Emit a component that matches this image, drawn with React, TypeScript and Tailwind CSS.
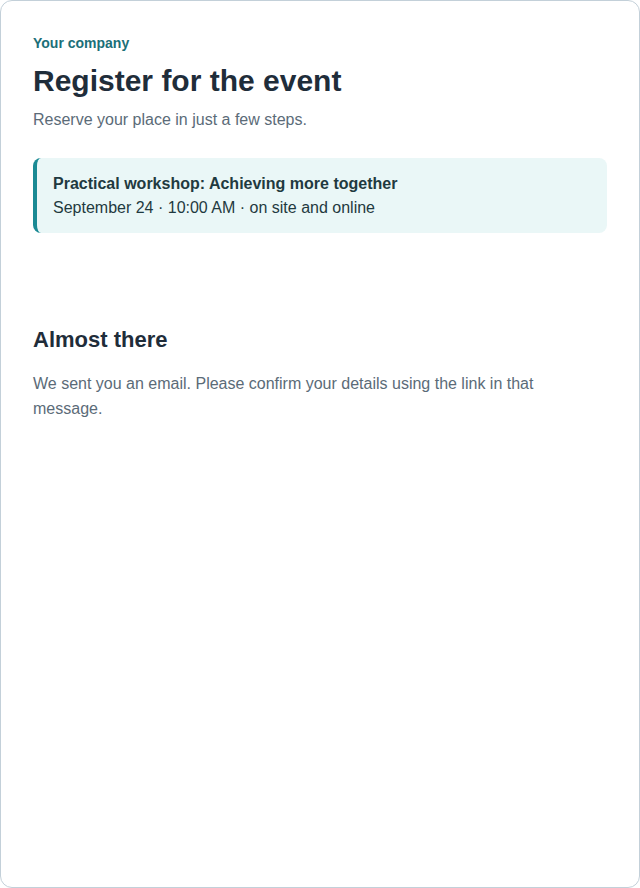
import React from "react";

export default function App() {
  return (
    <div className="w-[640px] h-[888px] bg-white" style={{ fontFamily: '"Liberation Sans", Arial, sans-serif' }}>
      <div className="h-full w-full rounded-[12px] border border-[#c3d0d9] bg-white px-8 pt-8">
        <div className="text-[14px] leading-[20px] font-bold text-[#1b6f78]">Your company</div>
        <h1 className="mt-[10px] text-[30px] leading-[36px] font-bold text-[#1f2d3a]">Register for the event</h1>
        <p className="mt-[9px] text-[16px] leading-[24px] text-[#5b6b78]">Reserve your place in just a few steps.</p>

        <div className="mt-[26px] rounded-[8px] border-l-4 border-[#1a8a94] bg-[#eaf7f7] pl-4 pr-4 pt-[14px] pb-[13px]">
          <div className="text-[16px] leading-[24px] font-bold text-[#1f3a40]">Practical workshop: Achieving more together</div>
          <div className="text-[16px] leading-[24px] text-[#1f3a40]">September 24 · 10:00 AM · on site and online</div>
        </div>

        <h2 className="mt-[93px] text-[22px] leading-[28px] font-bold text-[#1f2d3a]">Almost there</h2>
        <p className="mt-[17px] text-[16px] leading-[25px] text-[#5b6b78]">
          We sent you an email. Please confirm your details using the link in that message.
        </p>
      </div>
    </div>
  );
}
